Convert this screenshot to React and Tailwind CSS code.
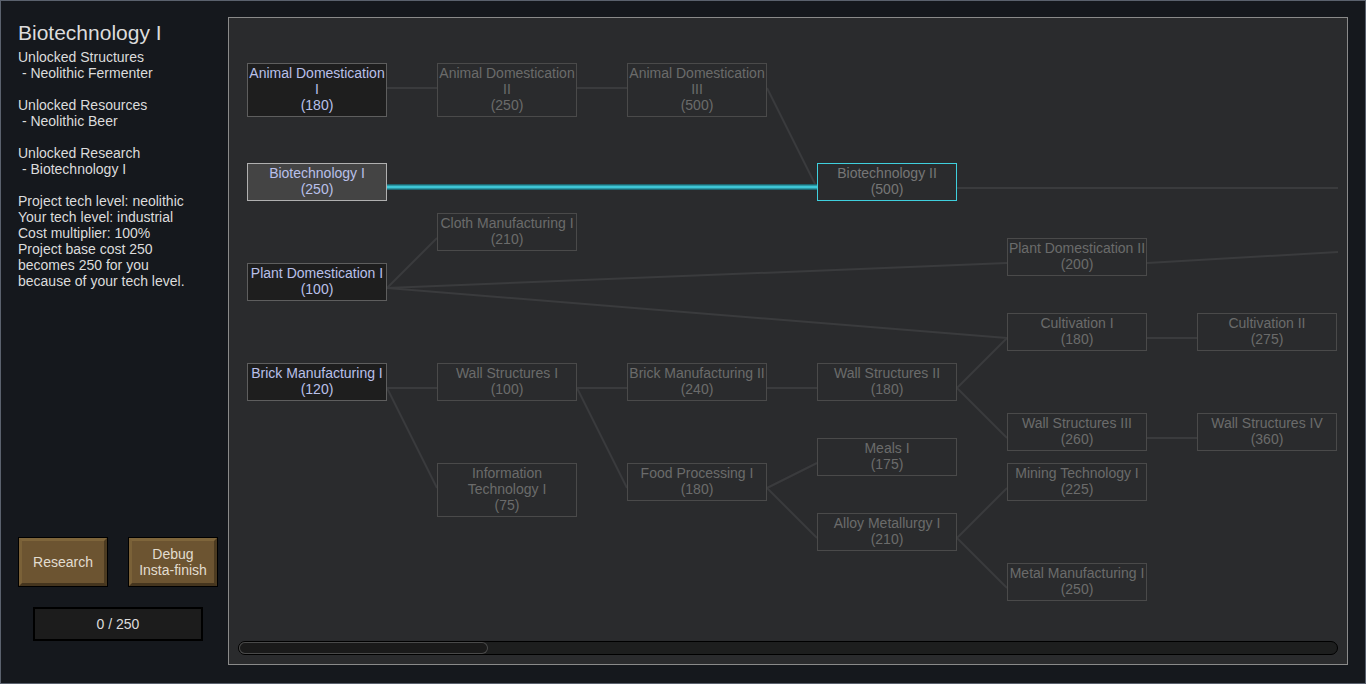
import React from "react";

// page coords of the canvas origin (panel at 228,17 + 1px border)
const OX = 229;
const OY = 18;

const nodes = [
  { id: "ad1", x: 247, y: 63, lines: ["Animal Domestication", "I", "(180)"], kind: "done" },
  { id: "ad2", x: 437, y: 63, lines: ["Animal Domestication", "II", "(250)"] },
  { id: "ad3", x: 627, y: 63, lines: ["Animal Domestication", "III", "(500)"] },
  { id: "bio1", x: 247, y: 163, lines: ["Biotechnology I", "(250)"], kind: "selected" },
  { id: "bio2", x: 817, y: 163, lines: ["Biotechnology II", "(500)"], kind: "target" },
  { id: "cloth", x: 437, y: 213, lines: ["Cloth Manufacturing I", "(210)"] },
  { id: "pd1", x: 247, y: 263, lines: ["Plant Domestication I", "(100)"], kind: "done" },
  { id: "pd2", x: 1007, y: 238, lines: ["Plant Domestication II", "(200)"] },
  { id: "cul1", x: 1007, y: 313, lines: ["Cultivation I", "(180)"] },
  { id: "cul2", x: 1197, y: 313, lines: ["Cultivation II", "(275)"] },
  { id: "br1", x: 247, y: 363, lines: ["Brick Manufacturing I", "(120)"], kind: "done" },
  { id: "ws1", x: 437, y: 363, lines: ["Wall Structures I", "(100)"] },
  { id: "br2", x: 627, y: 363, lines: ["Brick Manufacturing II", "(240)"] },
  { id: "ws2", x: 817, y: 363, lines: ["Wall Structures II", "(180)"] },
  { id: "ws3", x: 1007, y: 413, lines: ["Wall Structures III", "(260)"] },
  { id: "ws4", x: 1197, y: 413, lines: ["Wall Structures IV", "(360)"] },
  { id: "it1", x: 437, y: 463, lines: ["Information", "Technology I", "(75)"] },
  { id: "fp1", x: 627, y: 463, lines: ["Food Processing I", "(180)"] },
  { id: "meal", x: 817, y: 438, lines: ["Meals I", "(175)"] },
  { id: "alloy", x: 817, y: 513, lines: ["Alloy Metallurgy I", "(210)"] },
  { id: "mine", x: 1007, y: 463, lines: ["Mining Technology I", "(225)"] },
  { id: "metal", x: 1007, y: 563, lines: ["Metal Manufacturing I", "(250)"] },
];

const byId = Object.fromEntries(nodes.map((n) => [n.id, n]));

const edges = [
  ["ad1", "ad2"], ["ad2", "ad3"], ["ad3", "bio2"],
  ["pd1", "cloth"], ["pd1", "pd2"], ["pd1", "cul1"],
  ["cul1", "cul2"],
  ["br1", "ws1"], ["br1", "it1"], ["ws1", "br2"], ["ws1", "fp1"],
  ["br2", "ws2"], ["ws2", "cul1"], ["ws2", "ws3"], ["ws3", "ws4"],
  ["fp1", "meal"], ["fp1", "alloy"], ["alloy", "mine"], ["alloy", "metal"],
];

function Node({ n }) {
  let cls = "border-[#4a4a4a] text-[#6b6b6b]";
  if (n.kind === "done") cls = "border-[#5e5e5e] bg-[#1e1e1e] text-[#b9c0ea]";
  if (n.kind === "selected") cls = "border-[#b0b0b0] bg-[#444444] text-[#b9c0ea]";
  if (n.kind === "target") cls = "border-[#3fd0de] text-[#767676]";
  return (
    <div
      className={`absolute w-[140px] border pt-[1px] pb-[3px] text-center text-[14px] leading-[16px] whitespace-nowrap ${cls}`}
      style={{ left: n.x - OX, top: n.y - OY }}
    >
      {n.lines.map((l, i) => (
        <div key={i}>{l}</div>
      ))}
    </div>
  );
}

function Button({ children }) {
  return (
    <div className="w-[90px] h-[50px] border border-black">
      <div className="h-full border-[3px] border-t-[#7e653b] border-l-[#7a6138] border-r-[#4c3b21] border-b-[#45351e] bg-[#6c5431] flex items-center justify-center text-center text-[14px] leading-[16px] text-[#e2ddd0]">
        {children}
      </div>
    </div>
  );
}

export default function App() {
  return (
    <div
      className="w-[1366px] h-[684px] flex bg-[#15181d] border border-[#5a616d] overflow-hidden text-[#dcdcdc]"
      style={{ fontFamily: '"Liberation Sans", Arial, sans-serif' }}
    >
      {/* sidebar */}
      <div className="w-[227px] flex flex-col pl-[17px] pt-[20px] pb-[42px]">
        <div className="text-[21px] leading-[24px]">Biotechnology I</div>
        <div className="mt-[4px] text-[14px] leading-[16px] whitespace-pre">
          {"Unlocked Structures\n - Neolithic Fermenter\n\nUnlocked Resources\n - Neolithic Beer\n\nUnlocked Research\n - Biotechnology I\n\nProject tech level: neolithic\nYour tech level: industrial\nCost multiplier: 100%\nProject base cost 250\nbecomes 250 for you\nbecause of your tech level."}
        </div>
        <div className="mt-auto flex gap-[20px]">
          <Button>Research</Button>
          <Button>
            Debug
            <br />
            Insta-finish
          </Button>
        </div>
        <div className="mt-[20px] ml-[15px] w-[170px] h-[34px] shrink-0 border-2 border-black bg-[#1c1c1c] flex items-center justify-center text-[14px]">
          0 / 250
        </div>
      </div>

      {/* tech tree panel */}
      <div className="mt-[16px] w-[1120px] h-[648px] border border-[#8a8a8a] bg-[#2a2b2d] flex flex-col">
        <div className="relative flex-1 overflow-hidden">
          <svg className="absolute inset-0" width="1118" height="623">
            <g transform={`translate(${-OX},${-OY})`} fill="none">
              {edges.map(([a, b]) => {
                const s = byId[a];
                const t = byId[b];
                return (
                  <line
                    key={a + b}
                    x1={s.x + 140}
                    y1={s.y + 25}
                    x2={t.x}
                    y2={t.y + 25}
                    stroke="#3a3b3d"
                    strokeWidth="2"
                  />
                );
              })}
              <line x1="957" y1="188" x2="1338" y2="188" stroke="#3a3b3d" strokeWidth="2" />
              <line x1="1147" y1="263" x2="1338" y2="252" stroke="#3a3b3d" strokeWidth="2" />
              <line x1="387" y1="187" x2="817" y2="187" stroke="#1c6670" strokeWidth="6" />
              <line x1="387" y1="187" x2="817" y2="187" stroke="#3ec6d6" strokeWidth="3" />
            </g>
          </svg>
          {nodes.map((n) => (
            <Node key={n.id} n={n} />
          ))}
        </div>
        <div className="mx-[9px] mb-[9px] h-[14px] rounded-full border border-black bg-[#1d1e1e] flex">
          <div className="w-[249px] h-full rounded-full bg-[#1a1a1a] shadow-[inset_0_0_0_1px_#4a4a4a]" />
        </div>
      </div>
    </div>
  );
}
